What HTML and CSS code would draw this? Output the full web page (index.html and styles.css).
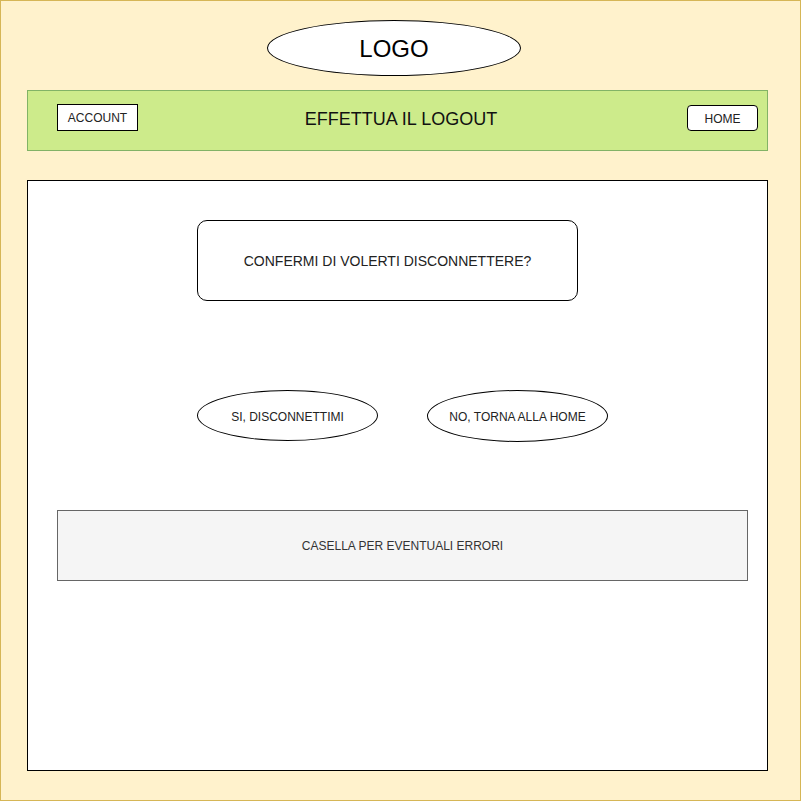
FILE: index.html
```html
<!DOCTYPE html>
<html lang="it">
<head>
<meta charset="utf-8">
<title>Logout</title>
<link rel="stylesheet" href="styles.css">
</head>
<body>
<div class="frame">
  <div class="logo">LOGO</div>
  <div class="navbar">
    <div class="btn account">ACCOUNT</div>
    <div class="nav-title">EFFETTUA IL LOGOUT</div>
    <div class="btn home">HOME</div>
  </div>
  <div class="panel">
    <div class="confirm">CONFERMI DI VOLERTI DISCONNETTERE?</div>
    <div class="choices">
      <div class="oval yes">SI, DISCONNETTIMI</div>
      <div class="oval no">NO, TORNA ALLA HOME</div>
    </div>
    <div class="errors">CASELLA PER EVENTUALI ERRORI</div>
  </div>
</div>
</body>
</html>
```

FILE: styles.css
```css
* { box-sizing: border-box; }
html, body { margin: 0; padding: 0; background: #ffffff; }
body { font-family: "Liberation Sans", Arial, sans-serif; color: #1a1a1a; }

.frame {
  width: 801px;
  height: 801px;
  background: #fff2cc;
  border: 1px solid #d6b656;
  display: flex;
  flex-direction: column;
  align-items: flex-start;
}

.logo {
  margin: 19px 0 0 266px;
  width: 254px;
  height: 56px;
  border: 1px solid #000;
  border-radius: 50%;
  background: #fff;
  display: flex;
  align-items: center;
  justify-content: center;
  font-size: 24px;
  padding-top: 2px;
  color: #000;
}

.navbar {
  margin: 14px 0 0 26px;
  width: 741px;
  height: 61px;
  background: #cdeb8b;
  border: 1px solid #82b366;
  display: flex;
  align-items: flex-start;
}

.btn {
  background: #fff;
  border: 1px solid #000;
  display: flex;
  align-items: center;
  justify-content: center;
  font-size: 12px;
  color: #222;
}
.account {
  margin: 13px 0 0 29px;
  width: 81px;
  height: 27px;
}
.home {
  margin: 14px 9px 0 0;
  width: 71px;
  height: 26px;
  border-radius: 4px;
  padding-top: 1px;
}
.nav-title {
  flex: 1;
  text-align: center;
  font-size: 18px;
  line-height: 20px;
  margin-top: 18px;
  padding-right: 23px;
  color: #111;
}

.panel {
  margin: 29px 0 0 26px;
  width: 741px;
  height: 591px;
  background: #fff;
  border: 1px solid #000;
  display: flex;
  flex-direction: column;
  align-items: flex-start;
}

.confirm {
  margin: 39px 0 0 169px;
  width: 381px;
  height: 81px;
  border: 1px solid #000;
  border-radius: 10px;
  display: flex;
  align-items: center;
  justify-content: center;
  font-size: 14px;
  padding-top: 1px;
  color: #222;
}

.choices {
  margin: 89px 0 0 169px;
  display: flex;
  gap: 49px;
}
.oval {
  width: 181px;
  height: 51px;
  border: 1px solid #000;
  border-radius: 50%;
  display: flex;
  align-items: center;
  justify-content: center;
  font-size: 12px;
  padding-top: 2px;
  color: #222;
}
.no { height: 52px; }

.errors {
  margin: 68px 0 0 29px;
  width: 691px;
  height: 71px;
  background: #f5f5f5;
  border: 1px solid #666;
  display: flex;
  align-items: center;
  justify-content: center;
  font-size: 12px;
  color: #333;
}
```
